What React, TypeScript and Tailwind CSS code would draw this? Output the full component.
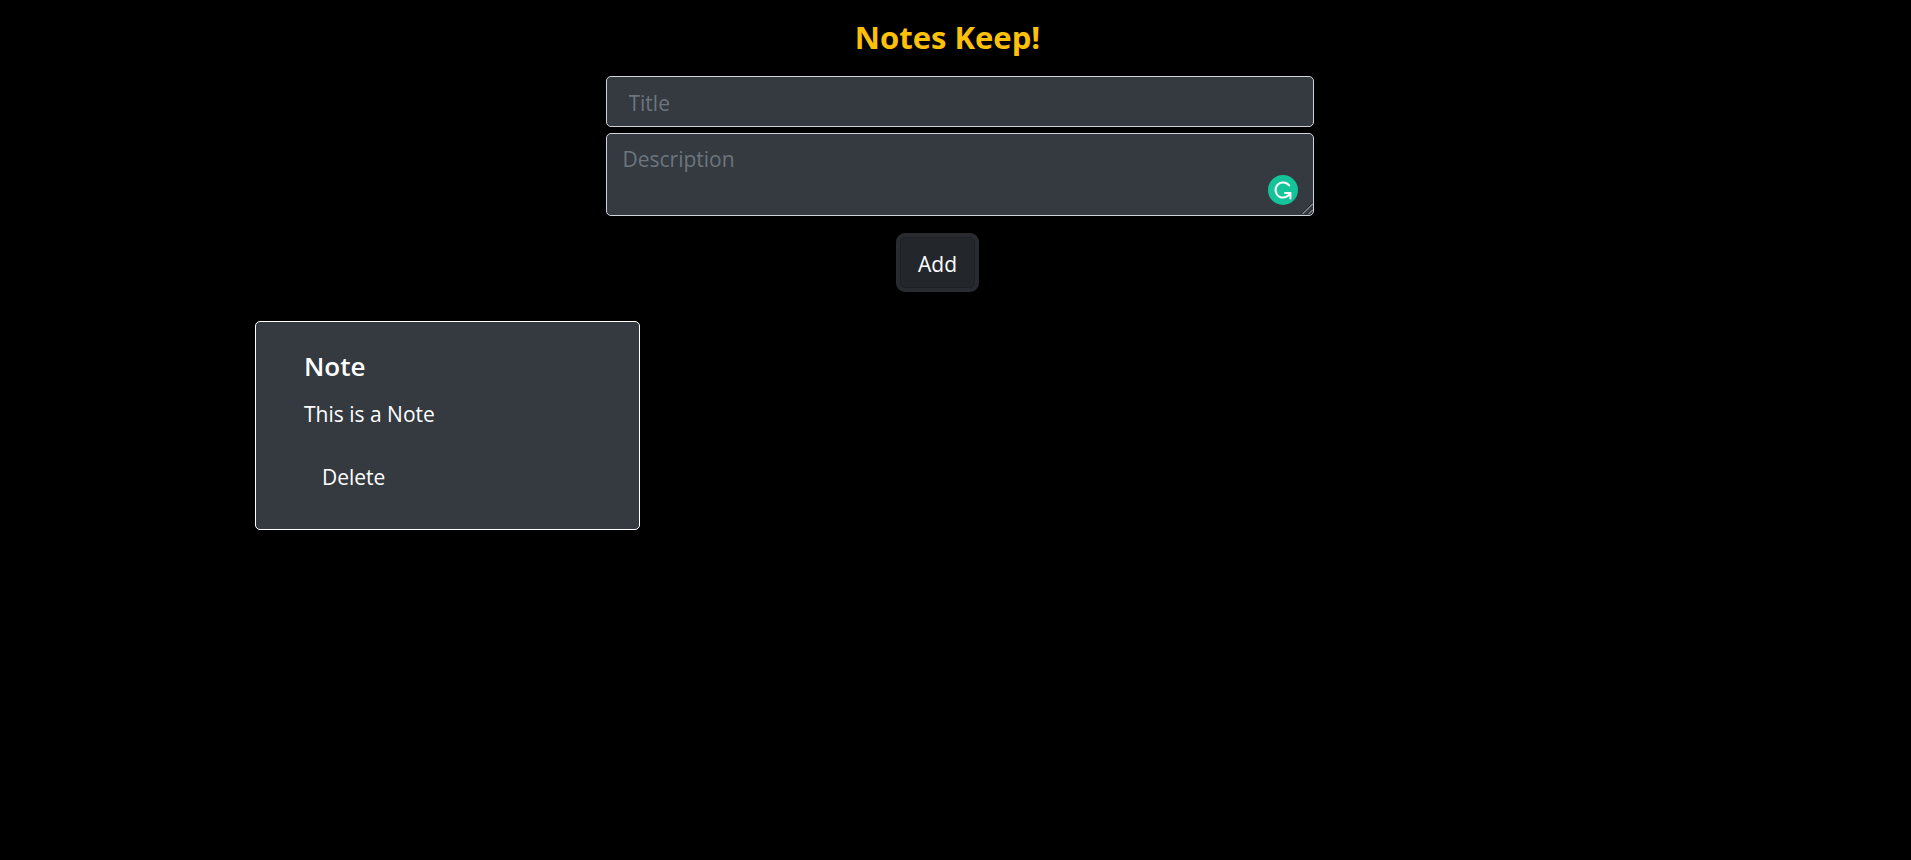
import { useState, type FormEvent } from "react";

type Note = { id: number; title: string; description: string };

const fieldClass =
  "block w-full rounded-[5px] border border-[#ced4da] bg-[#343a40] text-[21px] leading-[33px] text-white placeholder:text-[#6c757d] placeholder:opacity-100 outline-none";

function WritingBadge() {
  return (
    <svg
      viewBox="0 0 30 30"
      className="pointer-events-none absolute right-4 bottom-[11px] size-[30px]"
      aria-hidden="true"
    >
      <circle cx="15" cy="15" r="15" fill="#15c39a" />
      <path
        d="M21.2 10.4A7.6 7.6 0 1 0 15 22.6C17.6 22.6 19.6 21.6 21.6 19.2"
        fill="none"
        stroke="#fff"
        strokeWidth="2"
        strokeLinecap="round"
      />
      <path
        d="M17 18H22.4V23.4"
        fill="none"
        stroke="#fff"
        strokeWidth="2"
        strokeLinecap="round"
      />
    </svg>
  );
}

function ResizeGrip() {
  return (
    <svg
      viewBox="0 0 12 12"
      className="pointer-events-none absolute right-[1px] bottom-[2px] size-3"
      fill="none"
      aria-hidden="true"
    >
      <path d="M0.5 12L12 0.5M6.5 12L12 6.5" stroke="#111417" />
      <path d="M1.5 12L12 1.5M7.5 12L12 7.5" stroke="#c4c6c8" />
    </svg>
  );
}

export default function App() {
  const [notes, setNotes] = useState<Note[]>([
    { id: 1, title: "Note", description: "This is a Note" },
  ]);
  const [title, setTitle] = useState("");
  const [description, setDescription] = useState("");

  function addNote(event: FormEvent) {
    event.preventDefault();
    if (!title && !description) return;
    setNotes([...notes, { id: Date.now(), title, description }]);
    setTitle("");
    setDescription("");
  }

  return (
    <div className="min-h-screen bg-black font-['Open_Sans','Noto_Sans',sans-serif] text-white">
      <main className="mx-auto w-full max-w-[1401px] pt-[14px]">
        <h1 className="pr-4 text-center text-[31px] leading-[46px] font-bold text-[#ffc107]">
          Notes Keep!
        </h1>

        <form onSubmit={addNote} className="pt-4 pl-2">
          <div className="mx-auto flex w-full max-w-[708px] flex-col gap-[6px]">
            <input
              type="text"
              aria-label="Title"
              placeholder="Title"
              value={title}
              onChange={(e) => setTitle(e.target.value)}
              className={`${fieldClass} h-[51px] px-[22px] pt-[2px]`}
            />
            <div className="relative">
              <textarea
                aria-label="Description"
                placeholder="Description"
                value={description}
                onChange={(e) => setDescription(e.target.value)}
                className={`${fieldClass} h-[83px] resize-none px-4 py-[9px]`}
              />
              <WritingBadge />
              <ResizeGrip />
            </div>
          </div>
          <div className="flex justify-center pt-[21px] pr-[44px]">
            <button
              type="submit"
              className="h-[51px] rounded-[5px] border border-[#1d2124] bg-[#23272b] px-[17px] pt-[3px] text-[21px] leading-[33px] ring-4 ring-[#282c30]"
            >
              Add
            </button>
          </div>
        </form>

        <section className="flex flex-wrap gap-6 pt-[33px]" aria-label="Notes">
          {notes.map((note) => (
            <article
              key={note.id}
              className="w-full max-w-[385px] rounded-[5px] border border-white bg-[#343a40] px-12 pt-7 pb-[26px]"
            >
              <h2 className="text-[26px] leading-[33px] font-semibold">{note.title}</h2>
              <p className="pt-[15px] text-[21px] leading-[33px]">{note.description}</p>
              <button
                type="button"
                onClick={() => setNotes(notes.filter((n) => n.id !== note.id))}
                className="mt-[21px] h-[51px] rounded-[5px] px-[18px] text-[21px] leading-[33px]"
              >
                Delete
              </button>
            </article>
          ))}
        </section>
      </main>
    </div>
  );
}
